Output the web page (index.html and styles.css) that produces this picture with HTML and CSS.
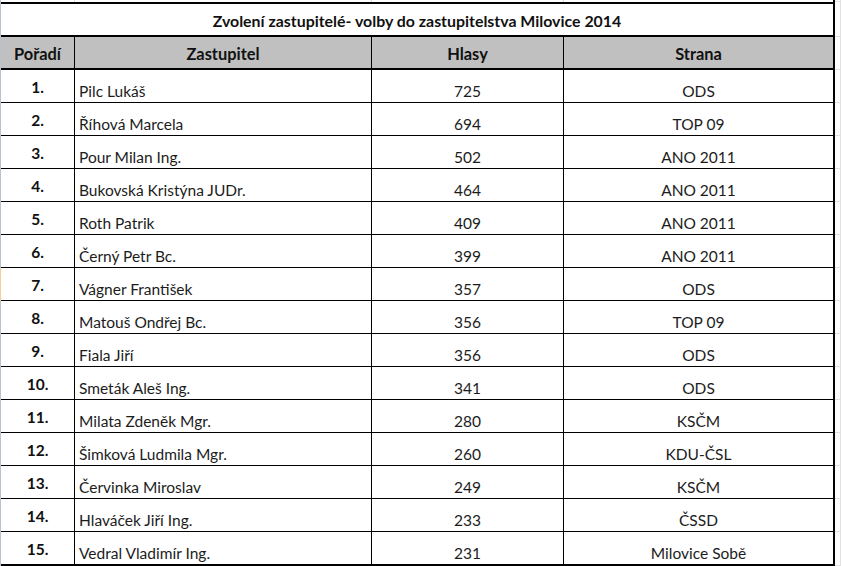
FILE: index.html
```html
<!DOCTYPE html>
<html lang="cs">
<head>
<meta charset="utf-8">
<title>Zvolení zastupitelé – volby do zastupitelstva Milovice 2014</title>
<link rel="stylesheet" href="styles.css">
</head>
<body>
<div class="sheet">
  <div class="grid">
    <div class="gl"></div><div class="gl"></div><div class="gl"></div><div class="gl gl-last"></div><div class="pad"></div>

    <div class="title">Zvolení zastupitelé- volby do zastupitelstva Milovice 2014</div><div class="pad"></div>

    <div class="th">Pořadí</div><div class="th">Zastupitel</div><div class="th">Hlasy</div><div class="th th-last">Strana</div><div class="pad"></div>

    <div class="rank">1.</div><div class="name">Pilc Lukáš</div><div class="votes">725</div><div class="party">ODS</div><div class="pad"></div>
    <div class="rank">2.</div><div class="name">Říhová Marcela</div><div class="votes">694</div><div class="party">TOP 09</div><div class="pad"></div>
    <div class="rank">3.</div><div class="name">Pour Milan Ing.</div><div class="votes">502</div><div class="party">ANO 2011</div><div class="pad"></div>
    <div class="rank">4.</div><div class="name">Bukovská Kristýna JUDr.</div><div class="votes">464</div><div class="party">ANO 2011</div><div class="pad"></div>
    <div class="rank">5.</div><div class="name">Roth Patrik</div><div class="votes">409</div><div class="party">ANO 2011</div><div class="pad"></div>
    <div class="rank">6.</div><div class="name">Černý Petr Bc.</div><div class="votes">399</div><div class="party">ANO 2011</div><div class="pad"></div>
    <div class="rank rank-sel">7.</div><div class="name">Vágner František</div><div class="votes">357</div><div class="party">ODS</div><div class="pad"></div>
    <div class="rank">8.</div><div class="name">Matouš Ondřej Bc.</div><div class="votes">356</div><div class="party">TOP 09</div><div class="pad"></div>
    <div class="rank">9.</div><div class="name">Fiala Jiří</div><div class="votes">356</div><div class="party">ODS</div><div class="pad"></div>
    <div class="rank">10.</div><div class="name">Smeták Aleš Ing.</div><div class="votes">341</div><div class="party">ODS</div><div class="pad"></div>
    <div class="rank">11.</div><div class="name">Milata Zdeněk Mgr.</div><div class="votes">280</div><div class="party">KSČM</div><div class="pad"></div>
    <div class="rank">12.</div><div class="name">Šimková Ludmila Mgr.</div><div class="votes">260</div><div class="party">KDU-ČSL</div><div class="pad"></div>
    <div class="rank">13.</div><div class="name">Červinka Miroslav</div><div class="votes">249</div><div class="party">KSČM</div><div class="pad"></div>
    <div class="rank">14.</div><div class="name">Hlaváček Jiří Ing.</div><div class="votes">233</div><div class="party">ČSSD</div><div class="pad"></div>
    <div class="rank last">15.</div><div class="name last">Vedral Vladimír Ing.</div><div class="votes last">231</div><div class="party last">Milovice Sobě</div><div class="pad"></div>
  </div>
</div>
</body>
</html>
```

FILE: styles.css
```css
* { box-sizing: border-box; }

html, body {
  margin: 0;
  padding: 0;
  background: #fff;
}

body {
  font-family: Lato, "Open Sans", "Liberation Sans", sans-serif;
  color: #1c1c1c;
  width: 842px;
  height: 566px;
  overflow: hidden;
}

.sheet {
  border-left: 1px solid #b9c3cf;
  height: 566px;
}

.grid {
  display: grid;
  grid-template-columns: 74px 297px 192px 271px 6px;
  grid-template-rows: 2px 35px 33px repeat(14, 33px) 34px;
}

.gl {
  border-right: 1px solid #dadada;
}
.gl-last {
  border-right: 2px solid #000;
}

.pad {
  border-right: 1px solid #e1e1e1;
  border-bottom: 1px solid #e1e1e1;
}

.title {
  grid-column: span 4;
  border-top: 2px solid #000;
  border-right: 2px solid #000;
  border-bottom: 2px solid #000;
  display: flex;
  align-items: center;
  justify-content: center;
  font-weight: 700;
  font-size: 15.9px;
  color: #111;
  padding-top: 1px;
}

.th {
  background: #c0c0c0;
  border-right: 1px solid #000;
  border-bottom: 2px solid #000;
  display: flex;
  align-items: center;
  justify-content: center;
  font-weight: 700;
  font-size: 16.4px;
  color: #111;
  padding-top: 2px;
}
.th-last { border-right-width: 2px; }

.rank, .name, .votes, .party {
  border-right: 1px solid #000;
  border-bottom: 1px solid #000;
  display: flex;
  font-size: 15.5px;
  line-height: 18px;
}

.rank {
  align-items: center;
  justify-content: center;
  font-weight: 700;
  color: #111;
  padding-top: 1px;
}

.rank-sel {
  box-shadow: -1px 0 0 #f1cf95;
}

.name, .votes, .party {
  align-items: flex-end;
  padding-bottom: 2px;
}

.name {
  padding-left: 4px;
}

.votes, .party {
  justify-content: center;
}

.party {
  border-right-width: 2px;
}

.last {
  border-bottom-width: 2px;
}
```
